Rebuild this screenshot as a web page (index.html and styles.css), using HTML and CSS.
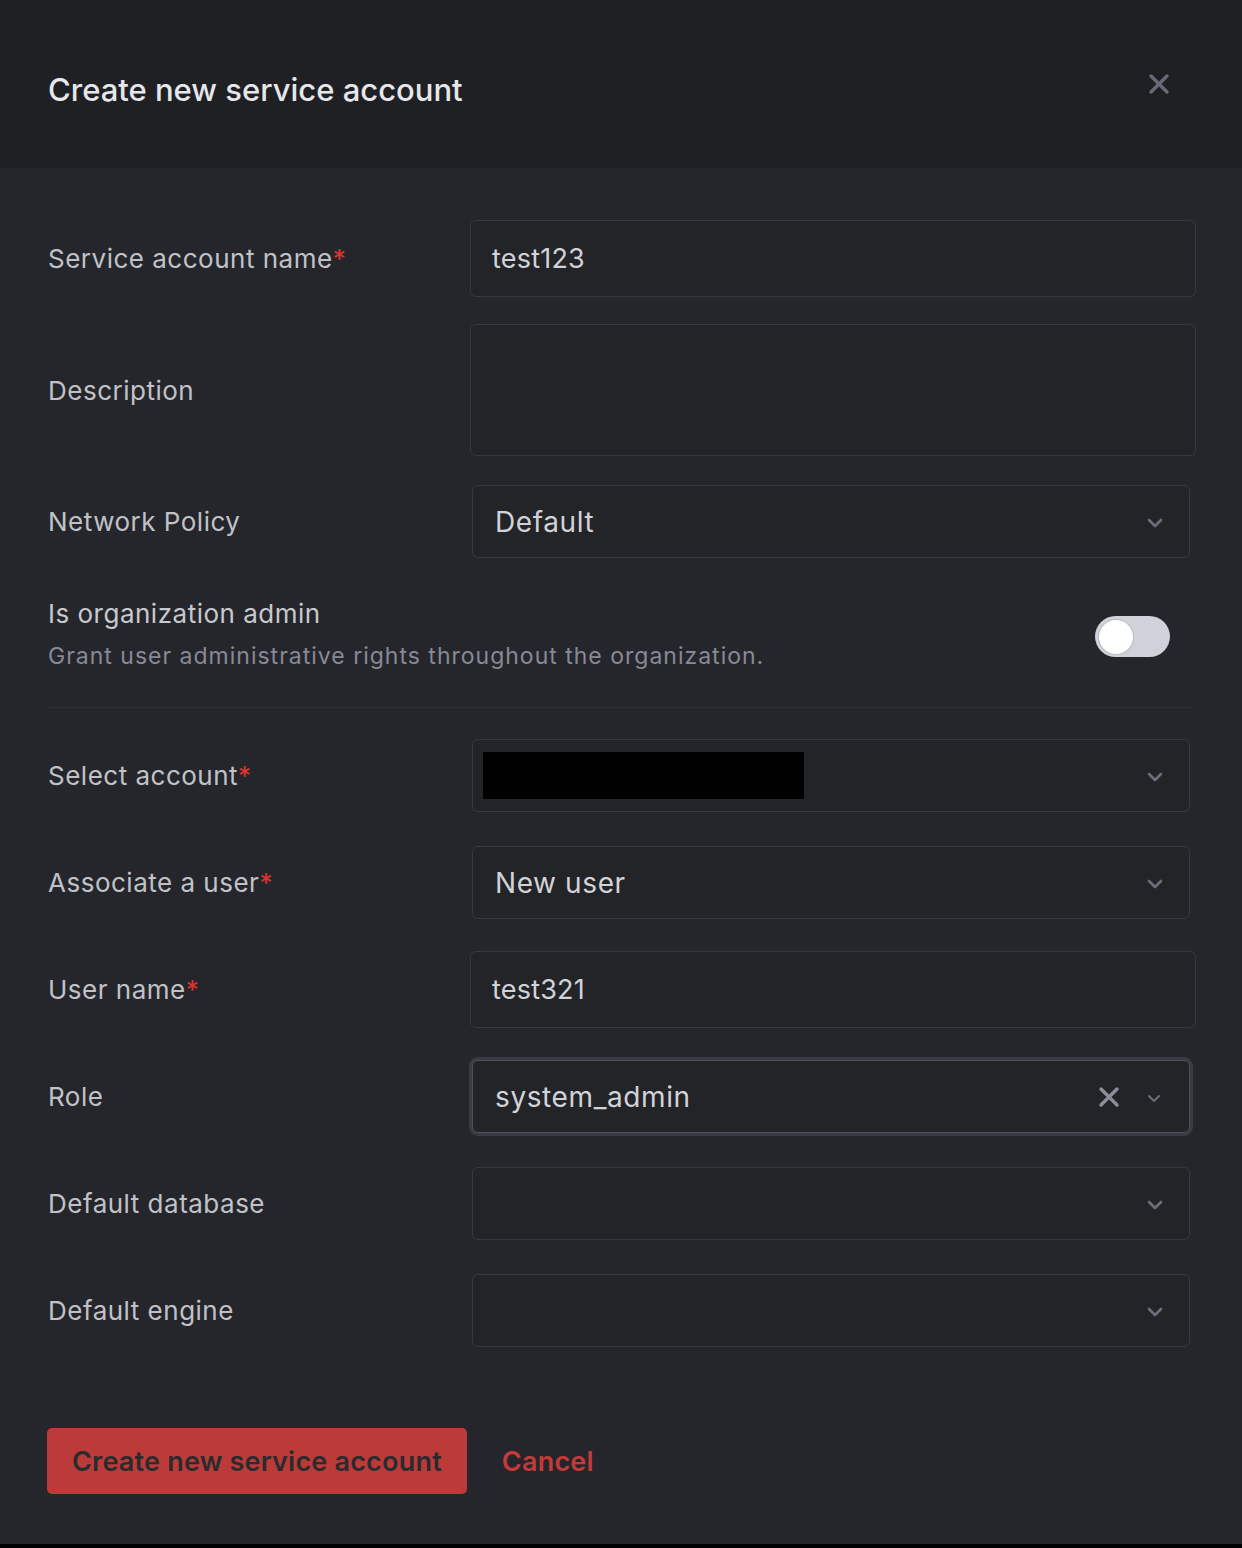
FILE: index.html
```html
<!DOCTYPE html>
<html>
<head>
<meta charset="utf-8">
<link rel="stylesheet" href="styles.css">
</head>
<body>
<div class="modal">
  <header class="modal-header">
    <h1 class="modal-title">Create new service account</h1>
    <button class="close-btn" aria-label="Close">
      <svg width="22" height="22" viewBox="0 0 22 22"><path d="M3 3 L19 19 M19 3 L3 19" stroke="#666a76" stroke-width="3.4" stroke-linecap="round"/></svg>
    </button>
  </header>
  <div class="modal-body">
    <div class="group first">
      <div class="row">
        <label class="label">Service account name<span class="req">*</span></label>
        <div class="field"><div class="input">test123</div></div>
      </div>
      <div class="row">
        <label class="label">Description</label>
        <div class="field"><div class="input textarea"></div></div>
      </div>
      <div class="row">
        <label class="label">Network Policy</label>
        <div class="field">
          <div class="select"><span class="value">Default</span>
            <svg class="chev" width="16" height="10" viewBox="0 0 16 10"><path d="M2 2 L8 8 L14 2" fill="none" stroke="#6c6f7b" stroke-width="2.6" stroke-linecap="round" stroke-linejoin="round"/></svg>
          </div>
        </div>
      </div>
    </div>

    <div class="toggle-row">
      <div class="toggle-text">
        <div class="toggle-label">Is organization admin</div>
        <div class="toggle-desc">Grant user administrative rights throughout the organization.</div>
      </div>
      <div class="switch"><div class="knob"></div></div>
    </div>
    <div class="divider"></div>

    <div class="group second">
      <div class="row">
        <label class="label">Select account<span class="req">*</span></label>
        <div class="field">
          <div class="select"><span class="redacted"></span>
            <svg class="chev" width="16" height="10" viewBox="0 0 16 10"><path d="M2 2 L8 8 L14 2" fill="none" stroke="#6c6f7b" stroke-width="2.6" stroke-linecap="round" stroke-linejoin="round"/></svg>
          </div>
        </div>
      </div>
      <div class="row">
        <label class="label">Associate a user<span class="req">*</span></label>
        <div class="field">
          <div class="select"><span class="value">New user</span>
            <svg class="chev" width="16" height="10" viewBox="0 0 16 10"><path d="M2 2 L8 8 L14 2" fill="none" stroke="#6c6f7b" stroke-width="2.6" stroke-linecap="round" stroke-linejoin="round"/></svg>
          </div>
        </div>
      </div>
      <div class="row">
        <label class="label">User name<span class="req">*</span></label>
        <div class="field"><div class="input">test321</div></div>
      </div>
      <div class="row">
        <label class="label">Role</label>
        <div class="field">
          <div class="select focused"><span class="value">system_admin</span>
            <svg class="clear" width="22" height="22" viewBox="0 0 22 22"><path d="M3 3 L19 19 M19 3 L3 19" stroke="#8b8e99" stroke-width="3.4" stroke-linecap="round"/></svg>
            <svg class="chev small" width="14" height="9" viewBox="0 0 14 9"><path d="M2 2 L7 7 L12 2" fill="none" stroke="#6c6f7b" stroke-width="2" stroke-linecap="round" stroke-linejoin="round"/></svg>
          </div>
        </div>
      </div>
      <div class="row">
        <label class="label">Default database</label>
        <div class="field">
          <div class="select"><span class="value"></span>
            <svg class="chev" width="16" height="10" viewBox="0 0 16 10"><path d="M2 2 L8 8 L14 2" fill="none" stroke="#6c6f7b" stroke-width="2.6" stroke-linecap="round" stroke-linejoin="round"/></svg>
          </div>
        </div>
      </div>
      <div class="row">
        <label class="label">Default engine</label>
        <div class="field">
          <div class="select"><span class="value"></span>
            <svg class="chev" width="16" height="10" viewBox="0 0 16 10"><path d="M2 2 L8 8 L14 2" fill="none" stroke="#6c6f7b" stroke-width="2.6" stroke-linecap="round" stroke-linejoin="round"/></svg>
          </div>
        </div>
      </div>
    </div>

    <div class="actions">
      <button class="btn-primary">Create new service account</button>
      <button class="btn-link">Cancel</button>
    </div>
  </div>
</div>
</body>
</html>
```

FILE: styles.css
```css
* { box-sizing: border-box; }
html, body { margin: 0; padding: 0; background: #000; }
body {
  font-family: Inter, "Noto Sans", "Liberation Sans", sans-serif;
  width: 1242px;
  height: 1548px;
  overflow: hidden;
}
.modal {
  width: 1242px;
  height: 1544px;
  background: #25262b;
}
.modal-header {
  height: 168px;
  background: #1f2023;
  display: flex;
  align-items: center;
  justify-content: space-between;
  padding: 0 72px 0 48px;
}
.modal-title {
  margin: 0;
  font-size: 31px;
  font-weight: 500;
  color: #e6e7eb;
  letter-spacing: 0;
  padding-top: 10px;
}
.close-btn {
  background: none;
  border: none;
  padding: 0;
  display: flex;
}
.modal-body {
  padding: 52px 46px 0 48px;
}
.group {
  display: flex;
  flex-direction: column;
}
.group.first { gap: 27px; }
.group.second { gap: 30px; }
.row {
  display: flex;
  align-items: center;
}
.label {
  width: 422px;
  flex: none;
  font-size: 26px;
  color: #c1c2c7;
  font-weight: 400;
  letter-spacing: 0.5px;
}
.req { color: #e03131; }
.field { flex: 1; }
.input {
  height: 77px;
  border: 1.5px solid #37393f;
  border-radius: 6px;
  background: #232428;
  color: #d2d3d8;
  font-size: 27px;
  letter-spacing: 0.2px;
  display: flex;
  align-items: center;
  padding-left: 21px;
}
.textarea { height: 132px; }
.select {
  height: 73px;
  margin: 2px 6px 2px 2px;
  border: 1.5px solid #37393f;
  border-radius: 6px;
  background: #232428;
  color: #d2d3d8;
  font-size: 28px;
  letter-spacing: 0.6px;
  display: flex;
  align-items: center;
  padding: 0 26px 0 22px;
}
.select .value { flex: 1; }
.select.focused {
  border-color: #4d4f59;
  box-shadow: 0 0 0 3px #393b44;
}
.chev { flex: none; margin-top: 3px; }
.chev.small { margin-left: 27px; margin-right: 2px; }
.clear { flex: none; }
.redacted {
  display: block;
  width: 321px;
  height: 47px;
  background: #000;
  margin-left: -12px;
  flex: none;
  margin-right: auto;
}
.toggle-row {
  display: flex;
  align-items: center;
  justify-content: space-between;
  margin-top: 36px;
  padding-right: 26px;
}
.toggle-label {
  font-size: 26px;
  color: #c8c9ce;
  line-height: 36px;
  letter-spacing: 0.5px;
}
.toggle-desc {
  font-size: 23px;
  color: #878a96;
  line-height: 36px;
  margin-top: 6px;
  letter-spacing: 1px;
}
.switch {
  width: 75px;
  height: 41px;
  border-radius: 21px;
  background: #d0d2da;
  padding: 4px;
  margin-top: 2px;
}
.knob {
  width: 34px;
  height: 34px;
  border-radius: 50%;
  background: #fff;
  box-shadow: 0 0 0 1px #b9bcc6;
}
.divider {
  height: 1px;
  background: #2b2d32;
  margin: 33px 0 29px 0;
}
.actions {
  display: flex;
  align-items: center;
  margin-top: 79px;
  gap: 35px;
  margin-left: -1px;
}
.btn-primary {
  height: 66px;
  padding: 0 25px;
  background: #bc3a37;
  color: #2a2b2f;
  border: none;
  border-radius: 5px;
  font-family: inherit;
  font-size: 27px;
  font-weight: 600;
  letter-spacing: 0.2px;
}
.btn-link {
  background: none;
  border: none;
  padding: 0;
  color: #c23b38;
  font-family: inherit;
  font-size: 27px;
  font-weight: 600;
  letter-spacing: 0.2px;
}
```
